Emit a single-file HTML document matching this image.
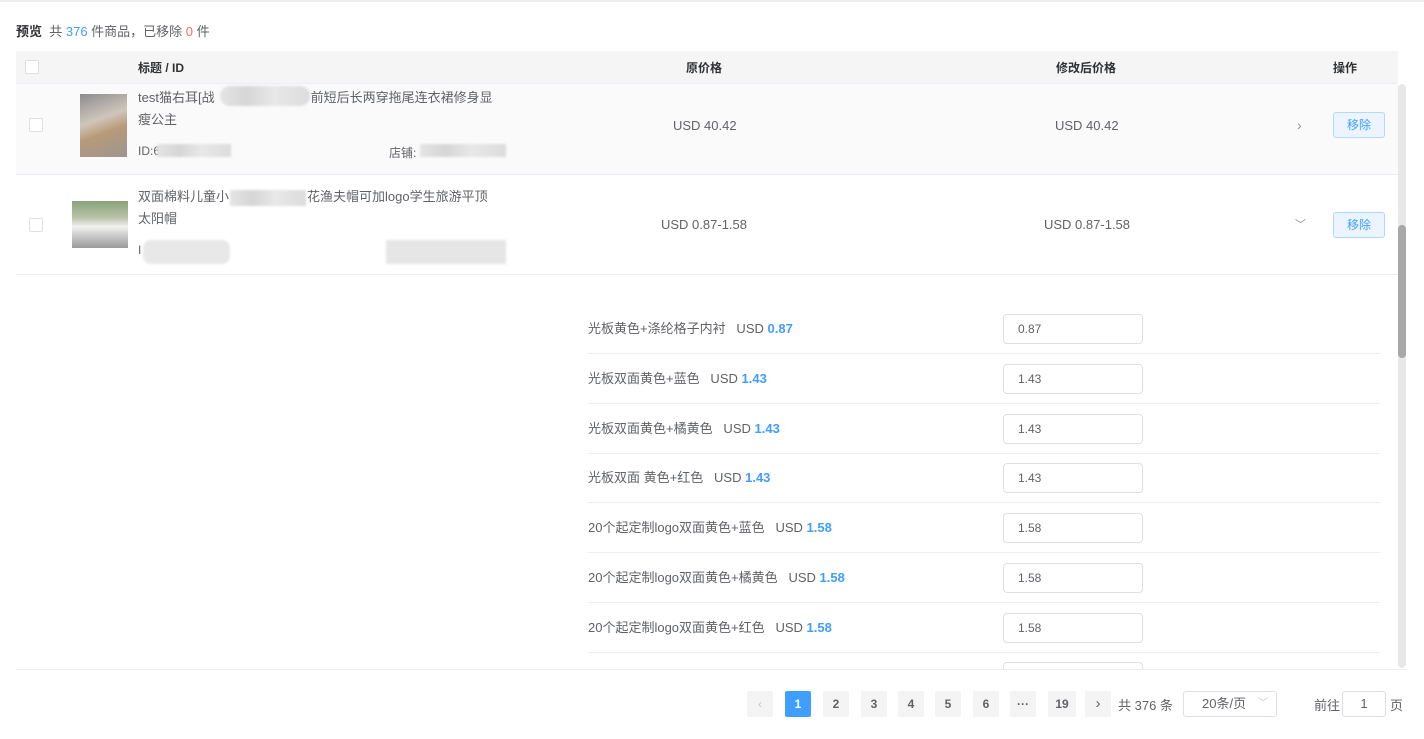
<!DOCTYPE html>
<html><head><meta charset="utf-8"><style>
*{margin:0;padding:0;box-sizing:border-box}
body{width:1424px;height:739px;background:#fff;font-family:"Liberation Sans","Noto Sans CJK SC",sans-serif;color:#606266;font-size:12px;position:relative;overflow:hidden}
.a{position:absolute;white-space:nowrap}
.cb{position:absolute;width:14px;height:14px;border:1px solid #dcdfe6;border-radius:2px;background:#fff}
.blur{position:absolute;background:linear-gradient(90deg,#e4e4e4,#d6d6d6 30%,#e8e8e8 60%,#dcdcdc);filter:blur(1px)}
.btn{position:absolute;width:52px;height:26px;border:1px solid #b3d8ff;background:#ecf5ff;color:#409eff;border-radius:3px;text-align:center;line-height:24px;font-size:12px}
.inp{position:absolute;left:1003px;width:140px;height:30px;border:1px solid #dcdfe6;border-radius:4px;padding-left:14px;line-height:28px;font-size:12px;color:#606266;background:#fff}
.lbl{position:absolute;left:588px;font-size:13px;color:#606266;white-space:nowrap}
.lbl b{color:#409eff}
.hl{position:absolute;left:588px;width:792px;height:1px;background:#ebeef5}
.pg{position:absolute;top:691px;width:26px;height:26px;background:#f4f4f5;border-radius:2px;text-align:center;line-height:26px;font-size:12px;font-weight:bold;color:#606266}
</style></head><body>
<div class="a" style="left:0;top:0;width:1424px;height:2px;background:#eee"></div>
<div class="a" style="left:16px;top:21px;font-size:13px;color:#606266"><b style="color:#303133">预览</b>&nbsp;&nbsp;共 <span style="color:#409eff">376</span> 件商品，已移除 <span style="color:#f56c6c">0</span> 件</div>

<div class="a" style="left:16px;top:51px;width:1382px;height:33px;background:#f5f5f6;border-bottom:1px solid #ebeef5"></div>
<div class="cb" style="left:25px;top:60px"></div>
<div class="a" style="left:138px;top:59px;font-weight:bold;color:#303133">标题 / ID</div>
<div class="a" style="left:686px;top:59px;font-weight:bold;color:#303133">原价格</div>
<div class="a" style="left:1056px;top:59px;font-weight:bold;color:#303133">修改后价格</div>
<div class="a" style="left:1333px;top:59px;font-weight:bold;color:#303133">操作</div>

<div class="a" style="left:16px;top:84px;width:1382px;height:91px;background:#fafafa;border-bottom:1px solid #ebeef5"></div>
<div class="cb" style="left:29px;top:118px"></div>
<div class="a" style="left:80px;top:94px;width:47px;height:63px;background:linear-gradient(160deg,#8c8c8c 0%,#cfc6bb 40%,#b89a78 60%,#9b9692 100%)"></div>
<div class="a" style="left:138px;top:87px;font-size:13px;line-height:22px;color:#606266">test猫右耳[战<span style="display:inline-block;width:96px"></span>前短后长两穿拖尾连衣裙修身显<br>瘦公主</div>
<div class="blur" style="left:220px;top:86px;width:90px;height:20px;border-radius:10px"></div>
<div class="a" style="left:138px;top:144px;font-size:12px">ID:6</div>
<div class="blur" style="left:157px;top:144px;width:74px;height:13px"></div>
<div class="a" style="left:389px;top:144px;font-size:12px">店铺:</div>
<div class="blur" style="left:420px;top:144px;width:86px;height:13px"></div>
<div class="a" style="left:673px;top:118px;font-size:13px">USD 40.42</div>
<div class="a" style="left:1055px;top:118px;font-size:13px">USD 40.42</div>
<div class="a" style="left:1297px;top:117px;font-size:14px;color:#909399">›</div>
<div class="btn" style="left:1333px;top:112px">移除</div>

<div class="a" style="left:16px;top:175px;width:1382px;height:100px;border-bottom:1px solid #ebeef5"></div>
<div class="cb" style="left:29px;top:218px"></div>
<div class="a" style="left:72px;top:201px;width:56px;height:47px;background:linear-gradient(180deg,#8aa37a 0%,#b9c2a8 35%,#f2f2f2 55%,#c8c8c8 75%,#9a9a9a 100%)"></div>
<div class="a" style="left:138px;top:186px;font-size:13px;line-height:22px;color:#606266">双面棉料儿童小<span style="display:inline-block;width:78px"></span>花渔夫帽可加logo学生旅游平顶<br>太阳帽</div>
<div class="blur" style="left:230px;top:190px;width:76px;height:16px"></div>
<div class="a" style="left:138px;top:243px;font-size:12px">I</div>
<div class="blur" style="left:143px;top:240px;width:87px;height:24px;border-radius:8px;background:#e8e8e8"></div>
<div class="blur" style="left:386px;top:240px;width:120px;height:24px;background:#e6e6e6"></div>
<div class="a" style="left:661px;top:217px;font-size:13px">USD 0.87-1.58</div>
<div class="a" style="left:1044px;top:217px;font-size:13px">USD 0.87-1.58</div>
<div class="a" style="left:1295px;top:216px;font-size:11px;color:#909399">﹀</div>
<div class="btn" style="left:1333px;top:212px">移除</div>

<div class="lbl" style="top:318px">光板黄色+涤纶格子内衬&nbsp;&nbsp;&nbsp;USD <b>0.87</b></div><div class="inp" style="top:314px">0.87</div><div class="hl" style="top:353px"></div>
<div class="lbl" style="top:368px">光板双面黄色+蓝色&nbsp;&nbsp;&nbsp;USD <b>1.43</b></div><div class="inp" style="top:364px">1.43</div><div class="hl" style="top:403px"></div>
<div class="lbl" style="top:418px">光板双面黄色+橘黄色&nbsp;&nbsp;&nbsp;USD <b>1.43</b></div><div class="inp" style="top:414px">1.43</div><div class="hl" style="top:453px"></div>
<div class="lbl" style="top:467px">光板双面 黄色+红色&nbsp;&nbsp;&nbsp;USD <b>1.43</b></div><div class="inp" style="top:463px">1.43</div><div class="hl" style="top:502px"></div>
<div class="lbl" style="top:517px">20个起定制logo双面黄色+蓝色&nbsp;&nbsp;&nbsp;USD <b>1.58</b></div><div class="inp" style="top:513px">1.58</div><div class="hl" style="top:552px"></div>
<div class="lbl" style="top:567px">20个起定制logo双面黄色+橘黄色&nbsp;&nbsp;&nbsp;USD <b>1.58</b></div><div class="inp" style="top:563px">1.58</div><div class="hl" style="top:602px"></div>
<div class="lbl" style="top:617px">20个起定制logo双面黄色+红色&nbsp;&nbsp;&nbsp;USD <b>1.58</b></div><div class="inp" style="top:613px">1.58</div><div class="hl" style="top:652px"></div>
<div class="inp" style="top:662px;height:7px;border-bottom:none;border-radius:4px 4px 0 0"></div>

<div class="a" style="left:0;top:669px;width:1424px;height:70px;background:#fff"></div>
<div class="a" style="left:16px;top:669px;width:1390px;height:1px;background:#ebeef5"></div>

<div class="a" style="left:1398px;top:84px;width:8px;height:584px;background:#e8e8e8;border-radius:4px"></div>
<div class="a" style="left:1398px;top:225px;width:8px;height:133px;background:#a8a8a8;border-radius:4px"></div>

<div class="pg" style="left:747px;color:#c0c4cc;font-weight:normal">‹</div>
<div class="pg" style="left:785px;background:#409eff;color:#fff">1</div>
<div class="pg" style="left:823px">2</div>
<div class="pg" style="left:861px">3</div>
<div class="pg" style="left:898px">4</div>
<div class="pg" style="left:935px">5</div>
<div class="pg" style="left:973px">6</div>
<div class="pg" style="left:1010px">···</div>
<div class="pg" style="left:1048px;width:28px">19</div>
<div class="pg" style="left:1085px;font-weight:normal;font-size:15px">›</div>
<div class="a" style="left:1118px;top:695px;font-size:13px">共 376 条</div>
<div class="a" style="left:1183px;top:691px;width:94px;height:26px;border:1px solid #dcdfe6;border-radius:3px;font-size:13px;line-height:24px;padding-left:18px">20条/页<span style="position:absolute;right:8px;top:2px;color:#c0c4cc;font-size:10px;line-height:20px">﹀</span></div>
<div class="a" style="left:1314px;top:695px;font-size:13px">前往</div>
<div class="a" style="left:1342px;top:691px;width:44px;height:26px;border:1px solid #dcdfe6;border-radius:3px;text-align:center;line-height:24px;font-size:13px">1</div>
<div class="a" style="left:1390px;top:695px;font-size:13px">页</div>
</body></html>
